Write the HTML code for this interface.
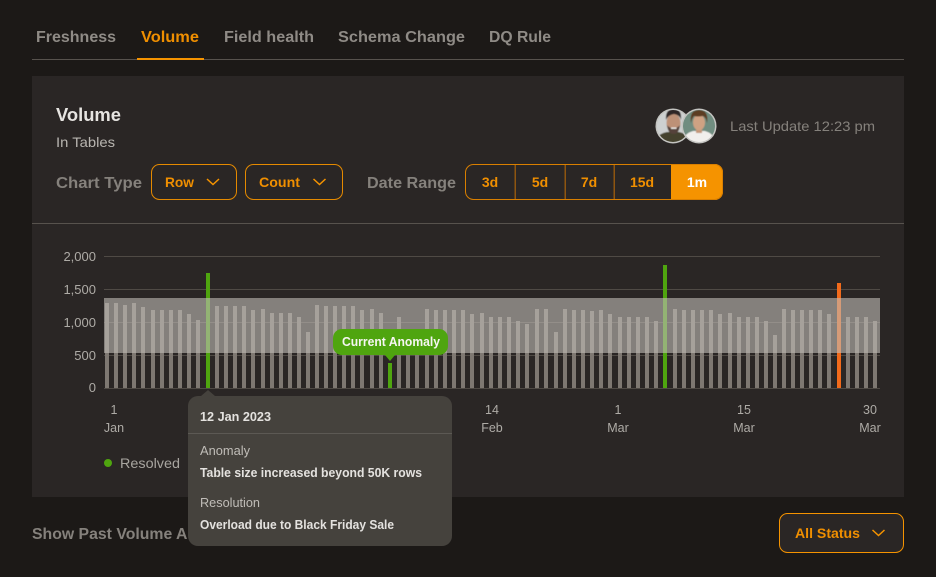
<!DOCTYPE html>
<html><head><meta charset="utf-8"><title>Volume</title>
<style>
html,body{margin:0;padding:0;background:#1c1917;width:936px;height:577px;overflow:hidden}
svg{display:block}
text{font-family:"Liberation Sans",sans-serif}
.b{font-weight:700}
</style></head><body>
<svg width="936" height="577" viewBox="0 0 936 577" xmlns="http://www.w3.org/2000/svg">
<defs>
<clipPath id="a1"><circle cx="673" cy="126" r="16"/></clipPath>
<clipPath id="a2"><circle cx="699" cy="126" r="16"/></clipPath>
<filter id="soft" x="-10%" y="-10%" width="120%" height="120%"><feGaussianBlur stdDeviation="0.45"/></filter>
</defs>
<rect width="936" height="577" fill="#1c1917"/>

<!-- tabs -->
<g class="b" font-size="16" fill="#8f8b86">
<text x="36" y="42" textLength="80" lengthAdjust="spacingAndGlyphs">Freshness</text>
<text x="141" y="42" textLength="58" lengthAdjust="spacingAndGlyphs" fill="#f08f00">Volume</text>
<text x="224" y="42" textLength="90" lengthAdjust="spacingAndGlyphs">Field health</text>
<text x="338" y="42" textLength="127" lengthAdjust="spacingAndGlyphs">Schema Change</text>
<text x="489" y="42" textLength="62" lengthAdjust="spacingAndGlyphs">DQ Rule</text>
</g>
<rect x="32" y="59" width="872" height="1" fill="#57524d"/>
<rect x="137" y="58" width="67" height="2" fill="#f59300"/>

<!-- panel -->
<rect x="32" y="76" width="872" height="421" fill="#2a2625"/>
<text x="56" y="121" class="b" font-size="18" fill="#e6e4e1" textLength="65" lengthAdjust="spacingAndGlyphs">Volume</text>
<text x="56" y="147" font-size="14" fill="#b8b5b0" textLength="59" lengthAdjust="spacingAndGlyphs">In Tables</text>

<!-- avatars -->
<circle cx="673" cy="126" r="17.500" fill="#c4c4c1"/>
<g clip-path="url(#a1)"><g filter="url(#soft)">
<rect x="655" y="108" width="36" height="36" fill="#cdd0d0"/>
<path d="M656 144v-5q4-6 11-7h12q7 1 10 7v5z" fill="#45432f"/>
<ellipse cx="673.500" cy="123" rx="7" ry="9.500" fill="#bd9177"/>
<path d="M666 120q-1-11 8-11 8 0 7 11-1-5-7-6-6 1-8 6z" fill="#2e2825"/>
<path d="M667 125q1 9 6.500 9 5.500 0 6.500-9-2 3-6.500 3-4.500 0-6.500-3z" fill="#55433a"/>
<rect x="671" y="127.500" width="5.500" height="1.400" fill="#f0eeea"/>
</g></g>
<circle cx="699" cy="126" r="17.500" fill="#c4c4c1"/>
<g clip-path="url(#a2)"><g filter="url(#soft)">
<rect x="681" y="108" width="36" height="36" fill="#6f8d80"/>
<path d="M683 144v-5q3-6 10-8h12q7 2 10 8v5z" fill="#f1efec"/>
<rect x="696" y="127" width="6" height="6" fill="#c39678"/>
<ellipse cx="699" cy="122.500" rx="6" ry="8" fill="#cfa283"/>
<path d="M691 123q-2-13 8-13 10 0 8 13-1-6-4-7-6 1-9 0-2 2-3 7z" fill="#5c3d22"/>
</g></g>
<text x="730" y="131" font-size="14" fill="#85817c" textLength="145" lengthAdjust="spacingAndGlyphs">Last Update 12:23 pm</text>

<!-- controls -->
<text x="56" y="188" class="b" font-size="16" fill="#85817c" textLength="86" lengthAdjust="spacingAndGlyphs">Chart Type</text>
<rect x="151.500" y="164.500" width="85" height="35" rx="8" fill="none" stroke="#e58a00"/>
<text x="165" y="187" class="b" font-size="14" fill="#f08f00" textLength="29" lengthAdjust="spacingAndGlyphs">Row</text>
<path d="M207 179l6 5.500 6-5.500" fill="none" stroke="#f59300" stroke-width="1.500"/>
<rect x="245.500" y="164.500" width="97" height="35" rx="8" fill="none" stroke="#e58a00"/>
<text x="259" y="187" class="b" font-size="14" fill="#f08f00" textLength="41" lengthAdjust="spacingAndGlyphs">Count</text>
<path d="M313.500 179l6 5.500 6-5.500" fill="none" stroke="#f59300" stroke-width="1.500"/>

<text x="367" y="188" class="b" font-size="16" fill="#85817c" textLength="89" lengthAdjust="spacingAndGlyphs">Date Range</text>
<path d="M671 164h44a8 8 0 0 1 8 8v20a8 8 0 0 1-8 8h-44z" fill="#f59300"/>
<rect x="465.500" y="164.500" width="257" height="35" rx="8" fill="none" stroke="#d97f00"/>
<g fill="#8f5510">
<rect x="514.500" y="165" width="1.500" height="34"/>
<rect x="564.500" y="165" width="1.500" height="34"/>
<rect x="613.500" y="165" width="1.500" height="34"/>
</g>
<g class="b" font-size="14" fill="#f08f00" text-anchor="middle">
<text x="490" y="187">3d</text>
<text x="540" y="187">5d</text>
<text x="589" y="187">7d</text>
<text x="642" y="187">15d</text>
<text x="697" y="187" fill="#fff">1m</text>
</g>
<rect x="32" y="223" width="872" height="1" fill="#57524d"/>

<!-- chart grid -->
<g fill="#4f4a45">
<rect x="104" y="256" width="776" height="1"/>
<rect x="104" y="289" width="776" height="1"/>
<rect x="104" y="322" width="776" height="1"/>
<rect x="104" y="355" width="776" height="1"/>
<rect x="104" y="388" width="776" height="1"/>
</g>
<g font-size="13" fill="#aeaba6" text-anchor="end">
<text x="96" y="261">2,000</text>
<text x="96" y="294">1,500</text>
<text x="96" y="327">1,000</text>
<text x="96" y="360">500</text>
<text x="96" y="392">0</text>
</g>

<!-- bars -->
<path fill="none" stroke="#7e7872" stroke-width="4" d="M107 388V303M116 388V303M125 388V305M134 388V303M143 388V307M153 388V310M162 388V310M171 388V310M180 388V310M189 388V314M198 388V320M217 388V306M226 388V306M235 388V306M244 388V306M253 388V310M263 388V309M272 388V313M281 388V313M290 388V313M299 388V317M308 388V332M317 388V305M326 388V306M335 388V306M344 388V306M353 388V306M362 388V310M372 388V309M381 388V313M399 388V317M408 388V330M417 388V330M427 388V309M436 388V310M445 388V310M454 388V310M463 388V310M472 388V314M482 388V313M491 388V317M500 388V317M509 388V317M518 388V321M527 388V324M537 388V309M546 388V309M556 388V332M565 388V309M574 388V310M583 388V310M592 388V311M601 388V310M610 388V314M620 388V317M629 388V317M638 388V317M647 388V317M656 388V321M675 388V309M684 388V310M693 388V310M702 388V310M711 388V310M720 388V314M730 388V313M739 388V317M748 388V317M757 388V317M766 388V321M775 388V335M784 388V309M793 388V310M802 388V310M811 388V310M820 388V310M829 388V314M848 388V317M857 388V317M866 388V317M875 388V321"/>
<path fill="none" stroke="#4fa50f" stroke-width="4" d="M208 388V273M390 388V363M665 388V265"/>
<path fill="none" stroke="#f26a1b" stroke-width="4" d="M839 388V283"/>
<rect x="104" y="298" width="776" height="55" fill="#c1bdb8" fill-opacity=".6"/>

<!-- current anomaly label -->
<rect x="333" y="329" width="115" height="26" rx="9" fill="#4fa50f"/>
<path d="M385 355h10l-5 6z" fill="#4fa50f"/>
<text x="342" y="346" class="b" font-size="12.500" fill="#f6f6f2" textLength="98" lengthAdjust="spacingAndGlyphs">Current Anomaly</text>

<!-- x axis -->
<g font-size="12.500" fill="#aeaba6" text-anchor="middle">
<text x="114" y="414">1</text><text x="114" y="432">Jan</text>
<text x="492" y="414">14</text><text x="492" y="432">Feb</text>
<text x="618" y="414">1</text><text x="618" y="432">Mar</text>
<text x="744" y="414">15</text><text x="744" y="432">Mar</text>
<text x="870" y="414">30</text><text x="870" y="432">Mar</text>
</g>

<!-- legend -->
<circle cx="108" cy="463" r="4" fill="#4fa50f"/>
<text x="120" y="468" font-size="14" fill="#a8a5a0" textLength="60" lengthAdjust="spacingAndGlyphs">Resolved</text>

<!-- bottom row -->
<text x="32" y="539" class="b" font-size="16" fill="#85817c" textLength="224" lengthAdjust="spacingAndGlyphs">Show Past Volume Anomalies</text>
<rect x="779.500" y="513.500" width="124" height="39" rx="8" fill="#2a2625" stroke="#f59300"/>
<text x="795" y="538" class="b" font-size="14" fill="#f08f00" textLength="65" lengthAdjust="spacingAndGlyphs">All Status</text>
<path d="M872.500 530l6 5.500 6-5.500" fill="none" stroke="#f59300" stroke-width="1.500"/>

<!-- tooltip -->
<path d="M201 396l7-6 7 6z" fill="#45423d"/>
<rect x="188" y="396" width="264" height="150" rx="10" fill="#45423d"/>
<rect x="188" y="433" width="264" height="1" fill="#5c5954"/>
<text x="200" y="421" class="b" font-size="12.500" fill="#e4e2df" textLength="71" lengthAdjust="spacingAndGlyphs">12 Jan 2023</text>
<text x="200" y="455" font-size="12.500" fill="#c0bdb8" textLength="50" lengthAdjust="spacingAndGlyphs">Anomaly</text>
<text x="200" y="477" class="b" font-size="12.500" fill="#e4e2df" textLength="222" lengthAdjust="spacingAndGlyphs">Table size increased beyond 50K rows</text>
<text x="200" y="507" font-size="12.500" fill="#c0bdb8" textLength="60" lengthAdjust="spacingAndGlyphs">Resolution</text>
<text x="200" y="529" class="b" font-size="12.500" fill="#e4e2df" textLength="194" lengthAdjust="spacingAndGlyphs">Overload due to Black Friday Sale</text>
</svg>
</body></html>
